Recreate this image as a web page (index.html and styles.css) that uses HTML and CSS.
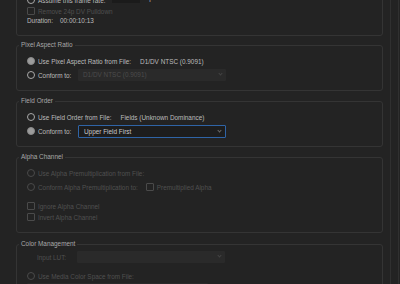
FILE: index.html
```html
<!DOCTYPE html>
<html lang="en">
<head>
    <meta charset="UTF-8">
    <title>Interpret Footage</title>
    <link rel="stylesheet" href="styles.css">
</head>
<body>
    <div class="window">
        <main class="panel">
            <fieldset class="group group-frame">
                <div class="row row-rate">
                    <span class="radio"></span>
                    <span class="label">Assume this frame rate:</span>
                    <span class="num-input">23.976</span>
                    <span class="unit">fps</span>
                </div>
                <div class="row row-pulldown off">
                    <span class="check"></span>
                    <span class="label">Remove 24p DV Pulldown</span>
                </div>
                <div class="row row-duration">
                    <span class="label duration-label">Duration:</span>
                    <span class="value">00:00:10:13</span>
                </div>
            </fieldset>

            <fieldset class="group group-par">
                <legend>Pixel Aspect Ratio</legend>
                <div class="row">
                    <span class="radio on"></span>
                    <span class="label">Use Pixel Aspect Ratio from File:</span>
                    <span class="value file-value">D1/DV NTSC (0.9091)</span>
                </div>
                <div class="row">
                    <span class="radio"></span>
                    <span class="label field-label">Conform to:</span>
                    <span class="select disabled">D1/DV NTSC (0.9091)<span class="chev"></span></span>
                </div>
            </fieldset>

            <fieldset class="group group-field">
                <legend>Field Order</legend>
                <div class="row">
                    <span class="radio"></span>
                    <span class="label">Use Field Order from File:</span>
                    <span class="value file-value">Fields (Unknown Dominance)</span>
                </div>
                <div class="row">
                    <span class="radio on"></span>
                    <span class="label field-label">Conform to:</span>
                    <span class="select focus">Upper Field First<span class="chev"></span></span>
                </div>
            </fieldset>

            <fieldset class="group group-alpha off">
                <legend>Alpha Channel</legend>
                <div class="row">
                    <span class="radio"></span>
                    <span class="label">Use Alpha Premultiplication from File:</span>
                </div>
                <div class="row">
                    <span class="radio"></span>
                    <span class="label">Conform Alpha Premultiplication to:</span>
                    <span class="check premult"></span>
                    <span class="label">Premultiplied Alpha</span>
                </div>
                <div class="row row-gap">
                    <span class="check"></span>
                    <span class="label">Ignore Alpha Channel</span>
                </div>
                <div class="row row-tight">
                    <span class="check"></span>
                    <span class="label">Invert Alpha Channel</span>
                </div>
            </fieldset>

            <fieldset class="group group-color off">
                <legend>Color Management</legend>
                <div class="row">
                    <span class="label field-label lut-label">Input LUT:</span>
                    <span class="select disabled"><span class="chev"></span></span>
                </div>
                <div class="row row-gap">
                    <span class="radio"></span>
                    <span class="label">Use Media Color Space from File:</span>
                </div>
                <div class="row">
                    <span class="select disabled wide"></span>
                </div>
            </fieldset>
        </main>
        <div class="scroll-track"></div>
    </div>
</body>
</html>
```

FILE: styles.css
```css
body {
    margin: 0;
    padding: 0;
    background-color: #232323;
    font-family: "Liberation Sans", Arial, sans-serif;
    font-size: 6.4px;
    color: #bcbcbc;
    overflow: hidden;
}

.window {
    display: flex;
    height: 284px;
    overflow: hidden;
}

.panel {
    width: 367px;
    margin-left: 16px;
    margin-top: -19px;
}

.scroll-track {
    width: 7px;
    margin-left: 7px;
    border-left: 1px solid #303030;
    border-right: 1px solid #303030;
}

/* groups */
.group {
    margin: 0 0 6px 0;
    padding: 5px 0 8px 10px;
    border: 1px solid #343434;
    border-radius: 3px;
    min-inline-size: 0;
}

.group legend {
    margin-left: -8px;
    padding: 0 2px;
    line-height: 8px;
    color: #a8a8a8;
}

.group-frame {
    padding-top: 12px;
    padding-bottom: 11px;
    margin-bottom: 5px;
}

.group-alpha {
    padding-top: 5px;
    padding-bottom: 10px;
    margin-bottom: 7px;
}

.group-color {
    padding-top: 2px;
}

.row {
    display: flex;
    align-items: center;
    height: 14px;
}

.row-rate {
    height: 12px;
}

.row-pulldown {
    height: 10px;
}

.row-duration {
    height: 8px;
}

.row-gap {
    margin-top: 6px;
    height: 12px;
}

.row-tight {
    height: 10px;
}

.label {
    white-space: nowrap;
}

.value {
    color: #bcbcbc;
    white-space: nowrap;
}

.file-value {
    margin-left: 9px;
}

.field-label {
    width: 40px;
}

.lut-label {
    margin-left: 10px;
}

.duration-label {
    width: 33px;
}

.off,
.off .label,
.off legend {
    color: #505050;
}

.group-color legend,
.group-alpha legend {
    color: #a8a8a8;
}

/* controls */
.radio {
    width: 6px;
    height: 6px;
    margin-right: 3px;
    border: 1px solid #a9a9a9;
    border-radius: 50%;
    background-color: #232323;
    flex: none;
}

.radio.on {
    background-color: #9c9c9c;
    border-color: #8a8a8a;
}

.off .radio {
    border-color: #4a4a4a;
}

.check {
    width: 6px;
    height: 6px;
    margin-right: 3px;
    border: 1px solid #4a4a4a;
    border-radius: 1px;
    flex: none;
}

.check.premult {
    margin-left: 8px;
}

.num-input {
    width: 24px;
    height: 10px;
    margin-left: 7px;
    padding-left: 4px;
    background-color: #1b1b1b;
    color: #9a9a9a;
    line-height: 10px;
    margin-top: -5px;
}

.unit {
    margin-left: 7px;
    margin-top: -5px;
}

.select {
    position: relative;
    width: 143px;
    height: 12px;
    padding-left: 5px;
    line-height: 12px;
    background-color: #2a2a2a;
    white-space: nowrap;
    border-radius: 1px;
}

.select.disabled {
    color: #4c4c4c;
}

.select.focus {
    width: 141px;
    height: 11px;
    line-height: 11px;
    border: 1px solid #2f64a6;
    background-color: #1d1d1d;
    color: #cacaca;
}

.select.wide {
    width: 176px;
    margin-left: 0;
}

.chev {
    position: absolute;
    right: 4px;
    top: 3px;
    width: 2px;
    height: 2px;
    border-right: 1px solid #6a6a6a;
    border-bottom: 1px solid #6a6a6a;
    transform: rotate(45deg);
}

.disabled .chev {
    border-color: #444;
}
```
